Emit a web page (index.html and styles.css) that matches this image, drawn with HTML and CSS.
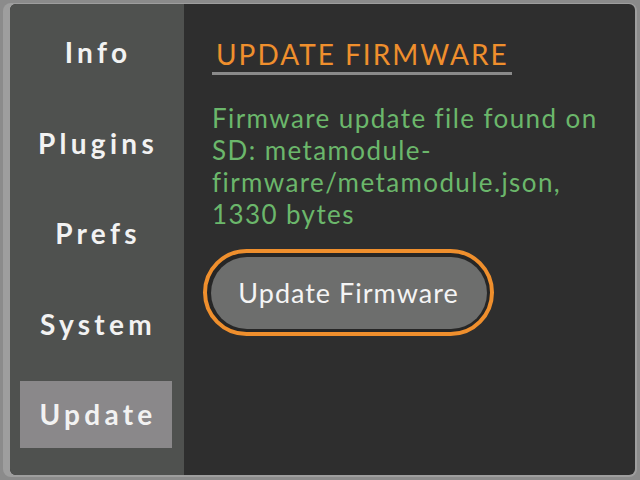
FILE: index.html
```html
<!DOCTYPE html>
<html>
<head>
<meta charset="utf-8">
<link rel="stylesheet" href="styles.css">
</head>
<body>
<div class="frame">
  <div class="screen">
    <nav class="sidebar">
      <div class="tab">Info</div>
      <div class="tab">Plugins</div>
      <div class="tab">Prefs</div>
      <div class="tab">System</div>
      <div class="tab active">Update</div>
    </nav>
    <main class="content">
      <h1 class="title">UPDATE FIRMWARE</h1>
      <p class="msg">Firmware update file found on SD: metamodule-firmware/metamodule.json, 1330 bytes</p>
      <div class="btn-row">
        <button class="btn"><span class="btn-face">Update Firmware</span></button>
      </div>
    </main>
  </div>
</div>
</body>
</html>
```

FILE: styles.css
```css
html, body {
  margin: 0;
  padding: 0;
}
body {
  width: 640px;
  height: 480px;
  background: #8b8b8b;
  font-family: Lato, "Noto Sans", sans-serif;
  overflow: hidden;
}
.frame {
  box-sizing: border-box;
  margin: 3px;
  height: 474px;
  background: #9e9e9e;
  border-radius: 8px;
  padding: 1px 2px 2px 7px;
  display: flex;
}
.screen {
  flex: 1;
  display: flex;
  border-radius: 6px;
  overflow: hidden;
  background: #2e2e2e;
}
.sidebar {
  width: 174px;
  background: #4f514f;
  display: flex;
  flex-direction: column;
  padding: 14.5px 12px 0 10px;
  gap: 23.5px;
  box-sizing: border-box;
}
.tab {
  height: 67px;
  display: flex;
  align-items: center;
  justify-content: center;
  color: #f2f2f2;
  font-weight: 700;
  font-size: 28px;
  letter-spacing: 4.3px;
  padding-left: 4px;
}
.tab.active {
  background: #8a888a;
}
.content {
  flex: 1;
  padding: 34px 0 0 28px;
  display: flex;
  flex-direction: column;
  align-items: flex-start;
}
.title {
  margin: 0;
  font-size: 28px;
  line-height: 32px;
  font-weight: 400;
  letter-spacing: 2px;
  color: #ef8f2d;
  padding: 0 3px 2px 4px;
  border-bottom: 3px solid #8a8a8a;
}
.msg {
  margin: 27px 0 0 0;
  width: 410px;
  font-size: 26px;
  line-height: 32px;
  letter-spacing: 1.4px;
  color: #6bb76b;
}
.btn-row {
  margin: 19px 0 0 -9px;
}
.btn {
  display: block;
  padding: 0;
  margin: 0;
  border: 4.5px solid #ef8f2d;
  border-radius: 50px;
  background: #262626;
  font: inherit;
}
.btn-face {
  display: flex;
  align-items: center;
  justify-content: center;
  margin: 3.5px;
  width: 276px;
  height: 72px;
  border-radius: 40px;
  background: #6d6e6d;
  color: #f4f4f4;
  font-size: 27px;
  letter-spacing: 1px;
}
```
